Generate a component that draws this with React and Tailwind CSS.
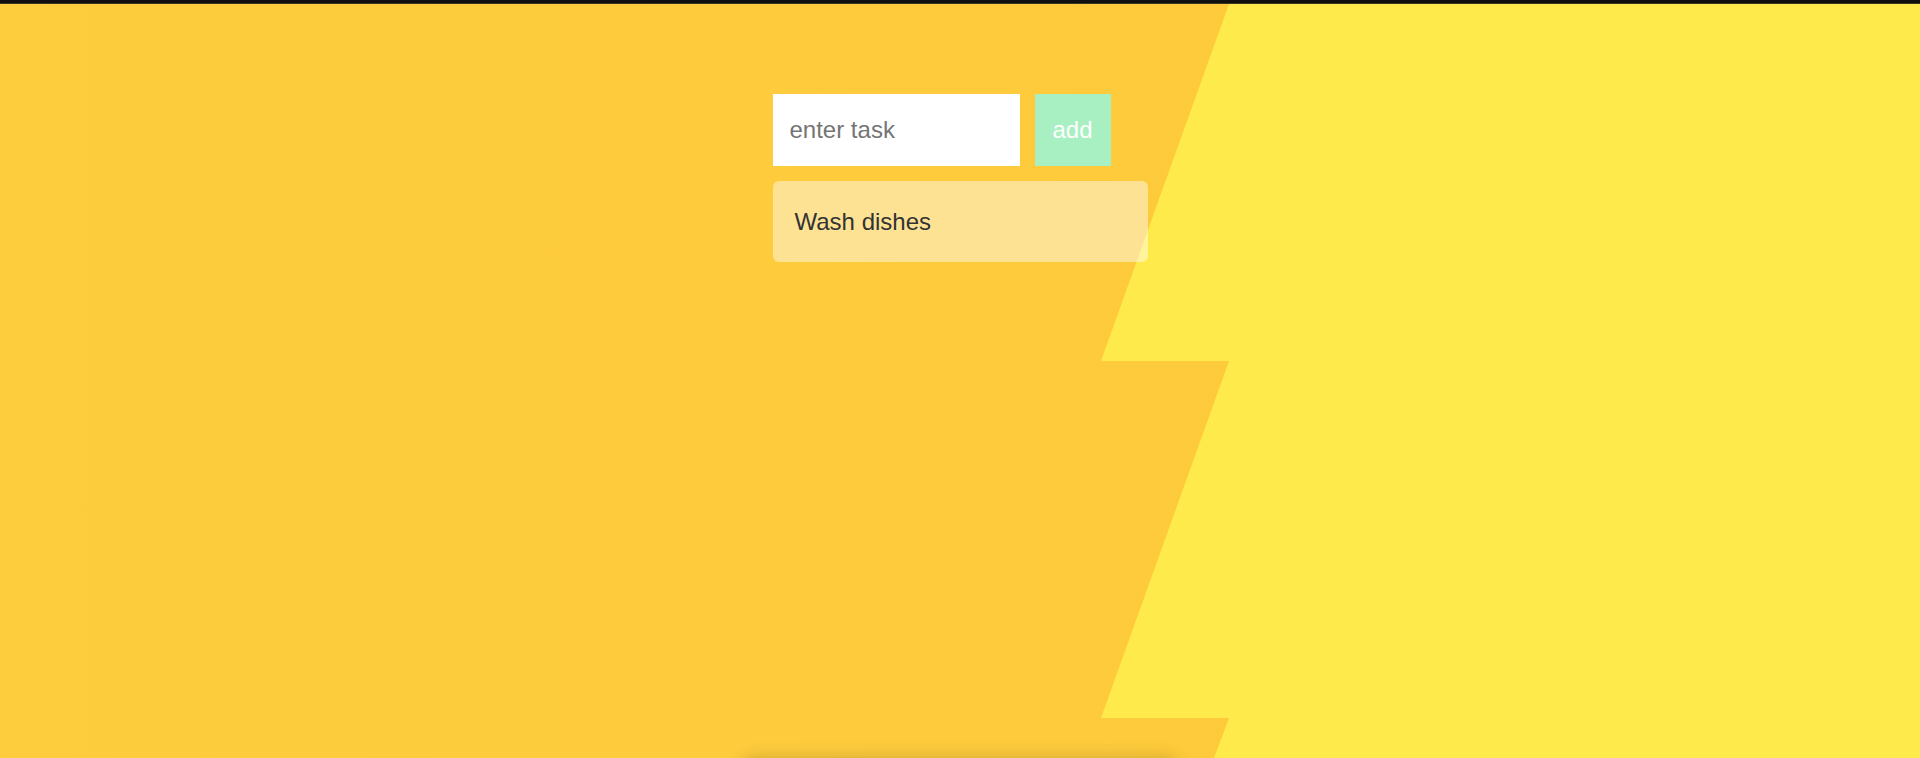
import { useState } from 'react';

const ZIGZAG = '1229,4 1920,4 1920,758 1214,758 1229,718 1101,718 1229,361 1101,361';

function Backdrop() {
  return (
    <svg
      className="absolute inset-0 w-full h-full"
      viewBox="0 0 1920 758"
      preserveAspectRatio="none"
    >
      <polygon points={ZIGZAG} fill="#ffea4b" />
    </svg>
  );
}

function TaskItem({ text }) {
  return (
    <div className="h-[81px] flex items-center pl-[22px] rounded-md bg-white/45 text-2xl text-[#333]">
      {text}
    </div>
  );
}

export default function App() {
  const [value, setValue] = useState('');
  const [tasks, setTasks] = useState(['Wash dishes']);

  const addTask = () => {
    if (!value.trim()) return;
    setTasks([...tasks, value.trim()]);
    setValue('');
  };

  return (
    <div
      className="relative h-[758px] overflow-hidden bg-[linear-gradient(90deg,#fdcd3e,#fec93a)]"
      style={{ fontFamily: '"Liberation Sans", Arial, sans-serif' }}
    >
      <Backdrop />
      <div className="relative h-[4px] bg-[#0f0f0f] border-b border-[#3a3520]" />

      <div className="relative flex justify-center pt-[90px]">
        <div className="w-[375px] flex flex-col gap-[15px]">
          <div className="flex gap-[15px]">
            <input
              value={value}
              onChange={e => setValue(e.target.value)}
              placeholder="enter task"
              className="w-[247px] h-[72px] pl-[17px] bg-white text-2xl text-[#333] placeholder:text-[#757575] outline-none"
            />
            <button
              onClick={addTask}
              className="w-[76px] h-[72px] bg-[#a8efc2] text-2xl text-white"
            >
              add
            </button>
          </div>
          {tasks.map((t, i) => (
            <TaskItem key={i} text={t} />
          ))}
        </div>
      </div>

      {/* card peeking in from below the fold */}
      <div className="absolute top-[760px] left-1/2 -translate-x-1/2 w-[430px] h-[120px] bg-[#fdcd3d] shadow-[0_-2px_16px_rgba(0,0,0,0.18)]" />
    </div>
  );
}
